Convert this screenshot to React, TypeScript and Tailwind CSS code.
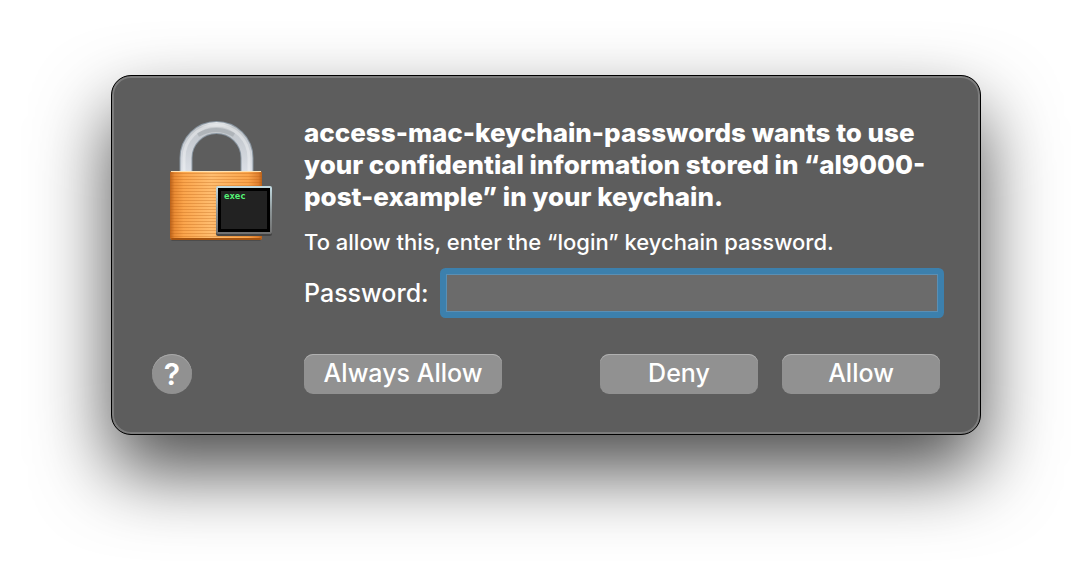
import { useState } from 'react';
import type { FormEvent, ReactNode } from 'react';

type PushButtonProps = {
  children: ReactNode;
  className: string;
  type?: 'button' | 'submit';
};

function PushButton({ children, className, type = 'button' }: PushButtonProps) {
  return (
    <button
      type={type}
      className={`h-10 rounded-[9px] bg-[#919191] pb-0.5 text-[25px] leading-8 font-medium text-white shadow-[inset_0_1px_0_#b0b0b0] ${className}`}
    >
      {children}
    </button>
  );
}

function KeychainIcon() {
  return (
    <svg width="128" height="128" viewBox="0 0 128 128" aria-hidden="true">
      <defs>
        <linearGradient id="shackle" gradientUnits="userSpaceOnUse" x1="0" y1="4" x2="0" y2="58">
          <stop offset="0" stopColor="#eceff1" />
          <stop offset="0.12" stopColor="#c4c8cc" />
          <stop offset="0.35" stopColor="#c6cbd1" />
          <stop offset="1" stopColor="#dde1e8" />
        </linearGradient>
        <linearGradient id="brass" x1="0" y1="0" x2="1" y2="0">
          <stop offset="0" stopColor="#b9611a" />
          <stop offset="0.05" stopColor="#e98b34" />
          <stop offset="0.15" stopColor="#fba54c" />
          <stop offset="0.45" stopColor="#ffbd6f" />
          <stop offset="0.85" stopColor="#fba54c" />
          <stop offset="0.96" stopColor="#e08030" />
          <stop offset="1" stopColor="#b9611a" />
        </linearGradient>
        <pattern id="grooves" width="8" height="3" patternUnits="userSpaceOnUse">
          <rect width="8" height="1" y="2" fill="#b85c10" opacity="0.3" />
        </pattern>
        <linearGradient id="bezel" x1="0" y1="0" x2="0" y2="1">
          <stop offset="0" stopColor="#c3dce3" />
          <stop offset="0.5" stopColor="#8e9799" />
          <stop offset="1" stopColor="#707070" />
        </linearGradient>
      </defs>

      {/* shackle */}
      <path d="M28 56V41a30.500 30.500 0 0 1 61 0v15" fill="none" stroke="#8995a0" strokeWidth="13" />
      <path d="M28 56V41a30.500 30.500 0 0 1 61 0v15" fill="none" stroke="url(#shackle)" strokeWidth="11" />
      <path d="M26 55V41a32.500 32.500 0 0 1 65 0v14" fill="none" stroke="#ffffff" strokeOpacity="0.35" strokeWidth="3" />
      <path d="M40 18q18-10 36 0" fill="none" stroke="#8f969c" strokeOpacity="0.4" strokeWidth="4" />

      {/* body */}
      <rect x="13" y="121" width="90" height="3" rx="1.500" fill="#3b3b3b" opacity="0.5" />
      <rect x="12" y="54" width="92" height="69" rx="2" fill="url(#brass)" />
      <rect x="12" y="56" width="92" height="65" fill="url(#grooves)" />
      <rect x="13" y="54" width="90" height="1" fill="#ffe3b3" />
      <rect x="13" y="121" width="90" height="2" rx="1" fill="#a3520f" />

      {/* terminal badge */}
      <rect x="58" y="70" width="56" height="49" rx="2" fill="#444444" />
      <rect x="58" y="69" width="56" height="48" rx="2" fill="url(#bezel)" />
      <rect x="60" y="71" width="52" height="44" fill="#000000" />
      <rect x="63" y="74" width="46" height="38" fill="#222222" />
      <text x="66" y="82" fill="#55f577" className="font-['DejaVu_Sans_Mono'] text-[9px] font-bold">
        exec
      </text>
    </svg>
  );
}

export default function App() {
  const [password, setPassword] = useState('');

  const handleSubmit = (e: FormEvent) => {
    e.preventDefault();
  };

  return (
    <main className="min-h-screen overflow-hidden bg-white pt-[75px] font-['Inter',sans-serif] text-white">
      <form
        role="dialog"
        aria-labelledby="dialog-title"
        onSubmit={handleSubmit}
        className="mx-auto w-4/5 max-w-[870px] rounded-[20px] border border-black bg-[#5d5d5d] px-10 pt-[41px] pb-10 shadow-[inset_0_0_0_2px_#7c7c7c,0_36px_76px_rgba(0,0,0,0.7)]"
      >
        <div className="flex">
          <div className="w-[152px] shrink-0 pl-1.5">
            <KeychainIcon />
          </div>

          <div className="min-w-0 grow">
            <h1 id="dialog-title" className="text-[26px] leading-8 font-extrabold">
              access-mac-keychain-passwords wants to use<br />
              your confidential information stored in “al9000-<br />
              post-example” in your keychain.
            </h1>
            <p className="mt-[15px] text-[22px] leading-7 font-medium">
              To allow this, enter the “login” keychain password.
            </p>
            <div className="mt-4 flex items-center">
              <label htmlFor="password" className="w-[140px] shrink-0 text-[25px] leading-8 font-medium">
                Password:
              </label>
              <input
                id="password"
                type="password"
                value={password}
                onChange={e => setPassword(e.target.value)}
                className="h-[42px] min-w-0 grow rounded-xs border-2 border-[#3c80ad] bg-[#6b6b6b] px-2 text-[25px] inset-ring inset-ring-[#5a8fb4] ring-4 ring-[#3c80ad] outline-none"
              />
            </div>
          </div>
        </div>

        <div className="mt-10 flex">
          <div className="w-[152px] shrink-0">
            <button
              type="button"
              aria-label="Help"
              className="size-10 rounded-full bg-[#919191] text-[30px] leading-10 font-semibold shadow-[inset_0_1px_0_#a8a8a8]"
            >
              ?
            </button>
          </div>
          <PushButton className="w-[198px]">Always Allow</PushButton>
          <div className="ml-auto flex gap-6">
            <PushButton className="w-[158px]">Deny</PushButton>
            <PushButton className="w-[158px]" type="submit">Allow</PushButton>
          </div>
        </div>
      </form>
    </main>
  );
}
